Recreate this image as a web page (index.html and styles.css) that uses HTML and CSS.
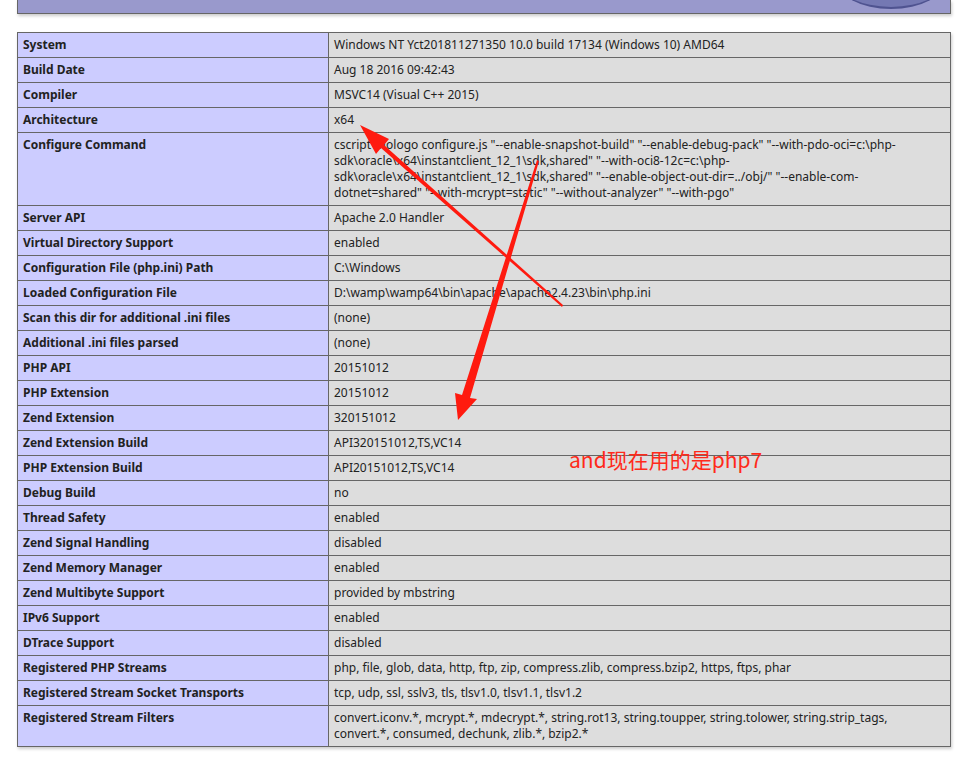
FILE: index.html
```html
<!DOCTYPE html>
<html>
<head>
<meta charset="utf-8">
<link rel="stylesheet" href="styles.css">
</head>
<body>
<div class="page">
  <div class="hdr"><div class="logo"></div></div>
  <table class="info">
    <tr><td class="e">System</td><td class="v">Windows NT Yct201811271350 10.0 build 17134 (Windows 10) AMD64</td></tr>
    <tr><td class="e">Build Date</td><td class="v">Aug 18 2016 09:42:43</td></tr>
    <tr><td class="e">Compiler</td><td class="v">MSVC14 (Visual C++ 2015)</td></tr>
    <tr><td class="e">Architecture</td><td class="v">x64</td></tr>
    <tr><td class="e">Configure Command</td><td class="v">cscript /nologo configure.js &quot;--enable-snapshot-build&quot; &quot;--enable-debug-pack&quot; &quot;--with-pdo-oci=c:\php-sdk\oracle\x64\instantclient_12_1\sdk,shared&quot; &quot;--with-oci8-12c=c:\php-sdk\oracle\x64\instantclient_12_1\sdk,shared&quot; &quot;--enable-object-out-dir=../obj/&quot; &quot;--enable-com-dotnet=shared&quot; &quot;--with-mcrypt=static&quot; &quot;--without-analyzer&quot; &quot;--with-pgo&quot;</td></tr>
    <tr><td class="e">Server API</td><td class="v">Apache 2.0 Handler</td></tr>
    <tr><td class="e">Virtual Directory Support</td><td class="v">enabled</td></tr>
    <tr><td class="e">Configuration File (php.ini) Path</td><td class="v">C:\Windows</td></tr>
    <tr><td class="e">Loaded Configuration File</td><td class="v">D:\wamp\wamp64\bin\apache\apache2.4.23\bin\php.ini</td></tr>
    <tr><td class="e">Scan this dir for additional .ini files</td><td class="v">(none)</td></tr>
    <tr><td class="e">Additional .ini files parsed</td><td class="v">(none)</td></tr>
    <tr><td class="e">PHP API</td><td class="v">20151012</td></tr>
    <tr><td class="e">PHP Extension</td><td class="v">20151012</td></tr>
    <tr><td class="e">Zend Extension</td><td class="v">320151012</td></tr>
    <tr><td class="e">Zend Extension Build</td><td class="v">API320151012,TS,VC14</td></tr>
    <tr><td class="e">PHP Extension Build</td><td class="v">API20151012,TS,VC14</td></tr>
    <tr><td class="e">Debug Build</td><td class="v">no</td></tr>
    <tr><td class="e">Thread Safety</td><td class="v">enabled</td></tr>
    <tr><td class="e">Zend Signal Handling</td><td class="v">disabled</td></tr>
    <tr><td class="e">Zend Memory Manager</td><td class="v">enabled</td></tr>
    <tr><td class="e">Zend Multibyte Support</td><td class="v">provided by mbstring</td></tr>
    <tr><td class="e">IPv6 Support</td><td class="v">enabled</td></tr>
    <tr><td class="e">DTrace Support</td><td class="v">disabled</td></tr>
    <tr><td class="e">Registered PHP Streams</td><td class="v">php, file, glob, data, http, ftp, zip, compress.zlib, compress.bzip2, https, ftps, phar</td></tr>
    <tr><td class="e">Registered Stream Socket Transports</td><td class="v">tcp, udp, ssl, sslv3, tls, tlsv1.0, tlsv1.1, tlsv1.2</td></tr>
    <tr><td class="e">Registered Stream Filters</td><td class="v">convert.iconv.*, mcrypt.*, mdecrypt.*, string.rot13, string.toupper, string.tolower, string.strip_tags, convert.*, consumed, dechunk, zlib.*, bzip2.*</td></tr>
  </table>
</div>
<svg class="marks" width="965" height="759" viewBox="0 0 965 759">
  <polygon fill="#ff1a0f" points="563,305 562,307 381,148 376,154 360,125 389,139 384,145"/>
  <polygon fill="#ff1a0f" points="537,160 539,161 470,398 477,399 458,420 455,393 462,395"/>
</svg>
<div class="note">and现在用的是php7</div>
</body>
</html>
```

FILE: styles.css
```css
html, body {
  margin: 0;
  padding: 0;
  background: #fff;
}
body {
  font-family: "Noto Sans", "Open Sans", "Noto Sans CJK SC", sans-serif;
  color: #222;
  position: relative;
  width: 965px;
  height: 759px;
  overflow: hidden;
}
.page {
  padding-left: 17px;
}
.hdr {
  width: 932px;
  height: 13px;
  background: #99c;
  border: 1px solid #666;
  border-top: none;
  box-shadow: 1px 2px 3px #ccc;
  position: relative;
  overflow: hidden;
}
.logo {
  position: absolute;
  right: 4px;
  bottom: 4px;
  width: 110px;
  height: 58px;
  border-radius: 50%;
  background: #7478b3;
  border-bottom: 2px solid #4f5390;
}
.info {
  margin-top: 18px;
  width: 934px;
  border-collapse: collapse;
  box-shadow: 1px 2px 3px #ccc;
}
.info td {
  border: 1px solid #666;
  font-size: 12px;
  line-height: 16px;
  padding: 4px 5px;
  vertical-align: baseline;
}
.e {
  background: #ccf;
  width: 300px;
  font-weight: bold;
  color: #222;
}
.v {
  background: #ddd;
  color: #222;
}
.marks {
  position: absolute;
  left: 0;
  top: 0;
  pointer-events: none;
}
.note {
  position: absolute;
  left: 569px;
  top: 446px;
  font-family: "Noto Sans CJK SC", sans-serif;
  font-size: 21px;
  line-height: 27px;
  color: #ff2a1a;
}
```
